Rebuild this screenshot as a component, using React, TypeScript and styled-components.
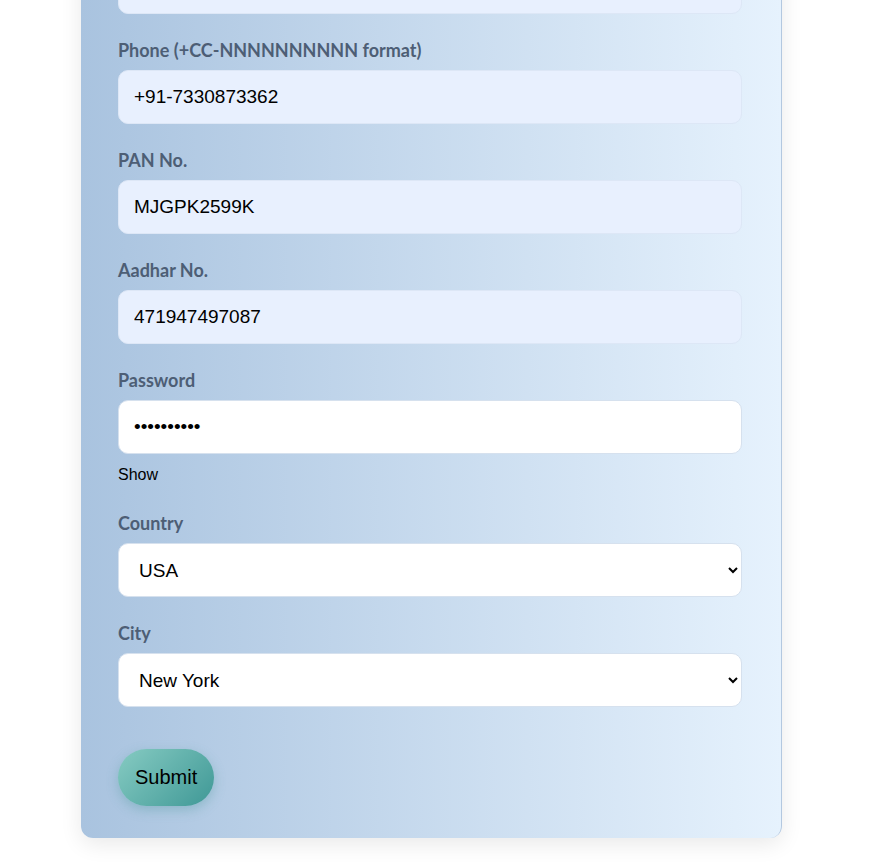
import React, { useState } from "react";
import styled, { createGlobalStyle } from "styled-components";

const GlobalStyle = createGlobalStyle`
  html, body {
    margin: 0;
    padding: 0;
    background: #ffffff;
    overflow: hidden;
  }
  body {
    font-family: "Liberation Sans", Arial, sans-serif;
  }
`;

const Page = styled.div`
  height: 867px;
  padding-left: 81px;
  overflow: hidden;
`;

const Card = styled.form`
  width: 701px;
  box-sizing: border-box;
  margin-top: -40px;
  padding: 0 39px 32px 37px;
  background: linear-gradient(to right, #a9c3df, #e6f2fd);
  border-right: 1px solid #b3c8e0;
  border-radius: 0 0 12px 12px;
  box-shadow: 0 6px 22px rgba(0, 0, 0, 0.09);
  display: flex;
  flex-direction: column;
`;

const Field = styled.div<{ $gap?: number }>`
  display: flex;
  flex-direction: column;
  margin-bottom: ${(p) => (p.$gap ?? 25)}px;
`;

const Label = styled.label`
  font-family: Lato, "Open Sans", sans-serif;
  font-weight: 700;
  font-size: 18px;
  line-height: 22px;
  color: #4d5e75;
  margin-bottom: 9px;
`;

const Input = styled.input<{ $filled?: boolean }>`
  height: 54px;
  box-sizing: border-box;
  padding: 0 15px;
  border: 1px solid ${(p) => (p.$filled ? "#dde7f6" : "#d6e1ee")};
  border-radius: 10px;
  background: ${(p) => (p.$filled ? "#e8f0fe" : "#ffffff")};
  font-family: "Liberation Sans", Arial, sans-serif;
  font-size: 19px;
  color: #000;
  outline: none;
`;

const ShowToggle = styled.span`
  margin-top: 12px;
  font-size: 16px;
  line-height: 18px;
  color: #000;
  cursor: pointer;
`;

const Select = styled.select`
  height: 54px;
  box-sizing: border-box;
  padding: 0 16px;
  border: 1px solid #d6e1ee;
  border-radius: 10px;
  background: #ffffff;
  font-family: "Liberation Sans", Arial, sans-serif;
  font-size: 19px;
  color: #000;
  outline: none;
`;

const SubmitButton = styled.button`
  align-self: flex-start;
  margin-top: 42px;
  height: 57px;
  padding: 0 17px;
  border: none;
  border-radius: 29px;
  background: linear-gradient(135deg, #86cbc2, #3f9896);
  box-shadow: 0 4px 12px rgba(70, 150, 150, 0.35);
  font-family: "Liberation Sans", Arial, sans-serif;
  font-size: 20px;
  color: #000;
  cursor: pointer;
`;

export default function App() {
  const [showPass, setShowPass] = useState(false);
  const [country, setCountry] = useState("USA");
  const [city, setCity] = useState("New York");

  return (
    <Page>
      <GlobalStyle />
      <Card onSubmit={(e) => e.preventDefault()}>
        <Field>
          <Input $filled defaultValue="" readOnly />
        </Field>
        <Field>
          <Label>Phone (+CC-NNNNNNNNNN format)</Label>
          <Input $filled defaultValue="+91-7330873362" />
        </Field>
        <Field>
          <Label>PAN No.</Label>
          <Input $filled defaultValue="MJGPK2599K" />
        </Field>
        <Field>
          <Label>Aadhar No.</Label>
          <Input $filled defaultValue="471947497087" />
        </Field>
        <Field $gap={28}>
          <Label>Password</Label>
          <Input type={showPass ? "text" : "password"} defaultValue="secret1234" />
          <ShowToggle onClick={() => setShowPass(!showPass)}>
            {showPass ? "Hide" : "Show"}
          </ShowToggle>
        </Field>
        <Field>
          <Label>Country</Label>
          <Select value={country} onChange={(e) => setCountry(e.target.value)}>
            <option>USA</option>
            <option>India</option>
            <option>UK</option>
          </Select>
        </Field>
        <Field $gap={0}>
          <Label>City</Label>
          <Select value={city} onChange={(e) => setCity(e.target.value)}>
            <option>New York</option>
            <option>Los Angeles</option>
            <option>Chicago</option>
          </Select>
        </Field>
        <SubmitButton type="submit">Submit</SubmitButton>
      </Card>
    </Page>
  );
}
